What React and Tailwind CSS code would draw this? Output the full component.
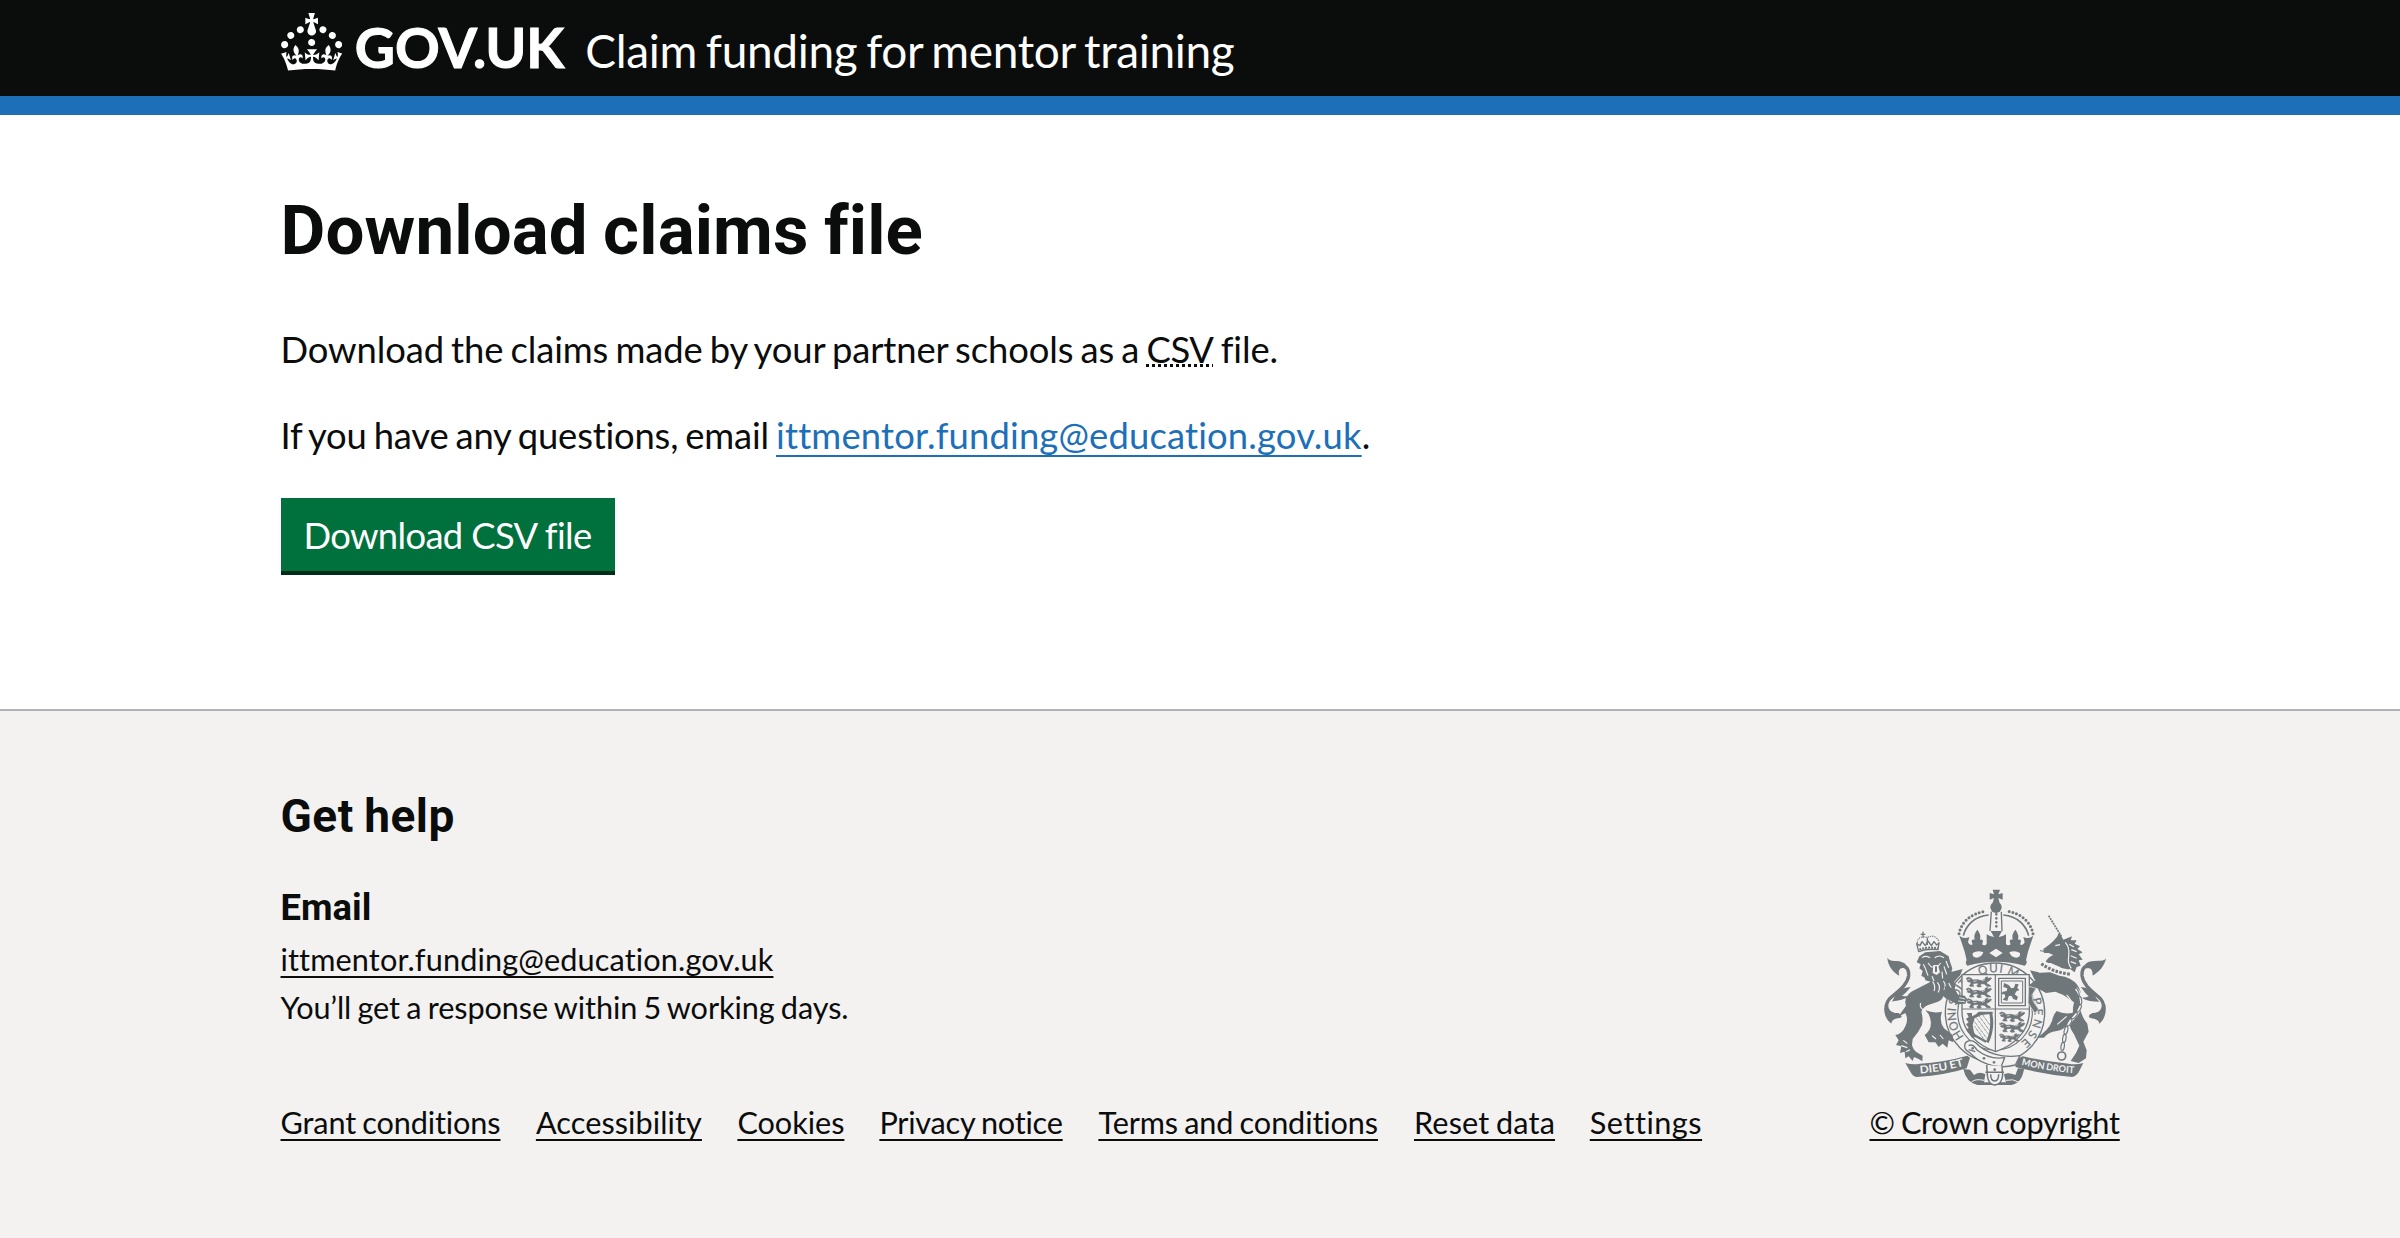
import React from "react";

const CROWN =
  "M22.6 10.4c-1 .4-2-.1-2.4-1-.4-.9.1-2 1-2.4.9-.4 2 .1 2.4 1s-.1 2-1 2.4m-5.9 6.7c-.9.4-2-.1-2.4-1-.4-.9.1-2 1-2.4.9-.4 2 .1 2.4 1s-.1 2-1 2.4m10.8-3.7c-1 .4-2-.1-2.4-1-.4-.9.1-2 1-2.4.9-.4 2 .1 2.4 1s0 2-1 2.4m3.3 4.8c-1 .4-2-.1-2.4-1-.4-.9.1-2 1-2.4.9-.4 2 .1 2.4 1s-.1 2-1 2.4M17 4.7l2.3 1.2V2.5l-2.3.7-.2-.2.9-3h-3.4l.9 3-.2.2c-.1.1-2.3-.7-2.3-.7v3.4L15 4.7c.1.1.1.2.2.2l-1.3 4c-.1.2-.1.4-.1.6 0 1.1.8 2 1.9 2.2h.7c1-.2 1.9-1.1 1.9-2.1 0-.2 0-.4-.1-.6l-1.3-4c-.1-.2 0-.2.1-.3m-7.6 5.7c.9.4 2-.1 2.4-1 .4-.9-.1-2-1-2.4-.9-.4-2 .1-2.4 1s0 2 1 2.4m-5 3c.9.4 2-.1 2.4-1 .4-.9-.1-2-1-2.4-.9-.4-2 .1-2.4 1s.1 2 1 2.4m-3.2 4.8c.9.4 2-.1 2.4-1 .4-.9-.1-2-1-2.4-.9-.4-2 .1-2.4 1s0 2 1 2.4m14.8 11c4.4 0 8.6.3 12.3.8 1.1-4.5 2.4-7 3.7-8.8l-2.5-.9c.2 1.3.3 1.9 0 2.7-.4-.4-.8-1.1-1.1-2.3l-1.2 4c.7-.5 1.3-.8 2-.9-1.1 2.5-2.6 3.1-3.5 3-1.1-.2-1.7-1.2-1.5-2.1.3-1.2 1.5-1.5 2.1-.1 1.1-2.3-.8-3-2-2.3 1.9-1.9 2.1-3.5.6-5.6-2.1 1.6-2.1 3.2-1.2 5.5-1.2-1.4-3.2-.6-2.5 1.6.9-1.4 2.1-.5 1.9.8-.2 1.1-1.7 2.1-3.5 1.9-2.7-.2-2.9-2.1-2.9-3.6.7-.1 1.9.5 2.9 1.9l.4-4.3c-1.1 1.1-2.1 1.4-3.2 1.4.4-1.2 2.1-3 2.1-3h-5.4s1.7 1.9 2.1 3c-1.1 0-2.1-.2-3.2-1.4l.4 4.3c1-1.4 2.2-2 2.9-1.9-.1 1.5-.2 3.4-2.9 3.6-1.9.2-3.4-.8-3.5-1.9-.2-1.3 1-2.2 1.9-.8.7-2.3-1.2-3-2.5-1.6.9-2.2.9-3.9-1.2-5.5-1.5 2-1.3 3.7.6 5.6-1.2-.7-3.1 0-2 2.3.6-1.4 1.8-1.1 2.1.1.2.9-.3 1.9-1.5 2.1-.9.2-2.4-.5-3.5-3 .6 0 1.2.3 2 .9l-1.2-4c-.3 1.1-.7 1.9-1.1 2.3-.3-.8-.2-1.4 0-2.7l-2.9.9C1.3 23 2.6 25.5 3.7 30c3.7-.5 7.9-.8 12.3-.8";

const INK = "#6f777b";
const PAPER = "#f3f2f1";

// One walking lion of the quartered shield, facing left.
function ShieldLion({ x, y }) {
  return (
    <g transform={`translate(${x} ${y})`}>
      <path
        fill={INK}
        stroke={INK}
        strokeWidth="2"
        d="M2 5l7-4 9 3 4 5 14-1 12 3 10-4 3-6 7-1-2 6 9-4 4 2-7 7-8 4 1 6 8 3 3 4-11 0-8-7-9-1-3 5 3 4-10 1-4-4 5-4-1-4-12 1-4 5 4 4-12 0-2-3 5-4-1-6-6 0-5-3 4-3z"
      />
      <path stroke={PAPER} strokeWidth="2" d="M8 7h6M24 13l10-1M50 12l9-4" />
    </g>
  );
}

// Crown, shield in its garter, lion, unicorn and motto scroll.
function RoyalArms() {
  return (
    <svg viewBox="0 0 750 645" className="block h-[215px] w-[250px]" fill="none" stroke={INK} strokeLinejoin="round">
      <defs>
        <path id="garter-top" d="M254 395A121 121 0 0 1 496 395" />
        <path id="garter-left" d="M283 469A118 118 0 0 1 330 286" />
        <path id="garter-right" d="M478 337A118 118 0 0 1 390 512" />
        <path id="motto-left" d="M150 577Q215 573 290 552" />
        <path id="motto-right" d="M454 551Q535 571 618 577" />
      </defs>

      {/* tails */}
      <g strokeLinecap="round">
        <path strokeWidth="10" d="M88 405C48 398 42 374 58 354C76 336 112 316 116 284C117 264 108 254 92 253" />
        <path fill={INK} stroke="none" d="M52 230C60 246 84 234 102 246C112 252 110 262 102 262C88 258 84 272 88 284C70 274 54 256 52 230Z" />
        <path fill={INK} stroke="none" d="M72 350C76 330 92 322 122 318C112 330 106 338 96 344C106 346 112 346 118 346C104 356 86 358 66 362Z" />
        <path fill={INK} stroke="none" d="M46 366C38 384 44 414 64 428C66 412 80 414 96 408L86 396C66 398 52 388 46 366Z" />
        <path strokeWidth="10" d="M662 405C702 398 708 374 692 354C674 336 640 316 636 284C635 264 644 254 658 253" />
        <path fill={INK} stroke="none" d="M708 232C700 246 668 234 650 246C642 252 644 262 650 262C664 260 668 268 668 284C686 274 704 256 708 232Z" />
        <path fill={INK} stroke="none" d="M678 350C674 330 660 322 632 318C642 330 648 340 656 346C648 350 642 350 634 350C650 360 668 362 688 362Z" />
        <path fill={INK} stroke="none" d="M706 370C710 388 706 414 688 428C686 412 670 416 656 408L666 396C684 398 700 388 706 370Z" />
      </g>

      {/* shoulders behind the garter */}
      <path fill={INK} stroke="none" d="M240 274L278 264L260 310L240 306ZM480 268L506 274L512 300L494 296Z" />

      {/* garter */}
      <circle cx="375" cy="395" r="153" fill={PAPER} stroke="none" />
      <circle cx="375" cy="395" r="149" strokeWidth="4" />
      <circle cx="375" cy="395" r="112" strokeWidth="3.5" />
      <g fill={INK} stroke={INK} strokeWidth=".6" fontFamily="Lato, sans-serif" fontSize="35">
        <text letterSpacing="3"><textPath href="#garter-top" startOffset="142">QUI M</textPath></text>
        <text><textPath href="#garter-left" startOffset="2">HONI SOIT</textPath></text>
        <text letterSpacing="9"><textPath href="#garter-right" startOffset="18">PENSE</textPath></text>
      </g>

      {/* lion */}
      <path
        fill={INK}
        stroke="none"
        d="M148 226L166 214L210 210L236 226L240 242L247 262L242 282L246 298L258 310L254 324L264 342L284 350L280 366L258 364L240 356L220 346Q216 362 186 368Q160 374 154 392Q160 412 156 432Q146 454 128 474L126 492Q130 508 140 514L158 524L157 541L146 534L132 528L128 540L116 526L106 532L104 512L90 516L94 496L78 492L86 478L76 462Q96 460 106 436Q116 416 106 396L84 408L108 374Q100 350 124 332L182 302L166 298L164 290L154 284L158 270L148 262L152 250L140 244Z"
      />
      <path
        fill={INK}
        stroke="none"
        d="M166 388Q192 398 216 392Q206 420 222 442L248 462L250 484L236 478L232 500L218 488L206 498L196 484L176 484L164 462Q186 446 182 420Q180 400 166 388Z"
      />
      <g stroke={PAPER} strokeWidth="3.5">
        <path d="M160 386C148 380 150 372 152 366" />
        <path d="M156 230Q166 222 180 230M194 230Q208 220 222 230M174 246L184 258L202 258L212 246" />
        <path d="M228 240L236 260M222 256L230 280M216 272L218 292M166 262L174 284M186 286L192 300M160 250L166 262" />
        <path d="M188 302Q198 316 192 330M202 304Q214 318 204 334M220 300Q230 312 222 326M236 306L248 330" />
        <path d="M100 478L112 488M94 494L112 500M108 512L120 506M186 464L198 474M210 462L220 474" />
      </g>
      <path fill={PAPER} stroke="none" d="M190 252h14l6 22-10 8-12-6z" />
      <path fill={INK} stroke="none" d="M195 256h6v16l-6 2z" />

      {/* lion's crown */}
      <path strokeWidth="4" d="M146 212L140 188L150 194L156 182L166 194L174 180L184 194L192 182L200 192L207 186L204 206Q172 202 146 212Z" />
      <path strokeWidth="3.5" strokeDasharray="4 3" d="M142 186C142 168 160 164 172 170C186 160 204 168 207 184" />
      <path strokeWidth="6" strokeDasharray="6 3" d="M148 206Q174 196 204 202" />
      <path strokeWidth="4" d="M159 152v18M152 160h14M172 170v22" />

      {/* unicorn */}
      <path strokeWidth="5" strokeDasharray="6 2.5" d="M536 104L574 166" />
      <path
        fill={INK}
        stroke="none"
        d="M520 204Q540 190 550 180Q562 170 568 154L580 176L606 166L602 178L620 178L614 188L630 196L622 204L638 214L626 220L638 236L626 238L632 254L620 258L614 274L600 264L586 270L570 258L542 246L524 246Q534 228 550 222L536 216L522 216Z"
      />
      <path
        fill={INK}
        stroke="none"
        d="M498 276L540 274L568 284Q604 288 622 312Q642 340 630 382Q636 410 652 428L656 452L640 482L650 508L648 532L626 546L602 540L618 516L628 494L612 460Q598 440 598 426Q580 448 560 450Q536 452 522 470L500 470Q536 448 546 420Q550 400 560 390Q580 400 606 396L612 364L580 342L556 332L528 336L500 320L488 340L492 362L508 388L494 396L476 366L478 312L498 296Z"
      />
      <g stroke={PAPER} strokeWidth="3.5">
        <path d="M556 194l14-3M586 184Q600 200 596 226Q592 246 604 262M598 190l14 8M604 206l16 6M602 224l18 8M602 242l16 6" />
        <path strokeWidth="12" d="M514 240Q550 266 600 272" />
        <path d="M590 342Q612 362 606 396M562 430l28-24" />
      </g>
      <path strokeWidth="9" strokeDasharray="8 4" d="M514 248Q550 274 602 280" />
      <path strokeWidth="3" d="M522 211l-12-2" />

      {/* chain */}
      <path strokeWidth="9" stroke={PAPER} d="M618 322C650 360 630 392 602 420C580 450 582 486 576 512" />
      <g strokeWidth="3.5">
        <ellipse cx="620" cy="334" rx="6" ry="13" transform="rotate(-20 620 334)" />
        <ellipse cx="630" cy="358" rx="5" ry="12" transform="rotate(-8 630 358)" />
        <ellipse cx="627" cy="382" rx="5" ry="12" transform="rotate(25 627 382)" />
        <ellipse cx="613" cy="404" rx="5" ry="12" transform="rotate(42 613 404)" />
        <ellipse cx="598" cy="424" rx="5" ry="12" transform="rotate(30 598 424)" />
        <ellipse cx="588" cy="448" rx="5" ry="12" transform="rotate(15 588 448)" />
        <ellipse cx="583" cy="472" rx="5" ry="12" transform="rotate(8 583 472)" />
        <ellipse cx="578" cy="496" rx="5" ry="12" transform="rotate(8 578 496)" />
        <circle cx="575" cy="525" r="12" strokeWidth="5" />
      </g>

      {/* shield */}
      <path fill={PAPER} strokeWidth="4" d="M276 281H478V392C478 452 430 494 377 512C324 494 276 452 276 392Z" />
      <path strokeWidth="3.5" d="M376 281V510M277 384H477" />
      <ShieldLion x={286} y={288} />
      <ShieldLion x={286} y={320} />
      <ShieldLion x={286} y={352} />
      <ShieldLion x={386} y={392} />
      <ShieldLion x={386} y={424} />
      <g transform="translate(386 458) scale(.8)"><ShieldLion x={0} y={0} /></g>
      <rect x="386" y="292" width="80" height="82" strokeWidth="4" />
      <rect x="394" y="300" width="64" height="66" strokeWidth="3" />
      <path fill={INK} stroke="none" d="M402 306l14 6 8 10 8-2 4-12 10 2-4 10 6 8-8 2-6 10 10 8-4 10-10-4-6-10-8 2-4 14-14-4 8-8-2-8-10 0 4-8 12-2 2-8-12-4z" />
      <path fill={INK} stroke="none" d="M290 396h16v10l12-6 8-8 42 0 0 6-34 4-20 10-6 20 4 22 8 14-14 2-6-10-12-14 8-6-8-10 8-6-8-10 8-6z" />
      <path strokeWidth="9" d="M362 396C368 424 364 458 352 484" />
      <path strokeWidth="3" strokeDasharray="3 2" d="M320 412l34 46M328 406l30 42M338 402l22 30M314 422l36 50M314 436l30 42" />
      <path strokeWidth="7" d="M312 462L348 482" />

      {/* paws that hold the shield */}
      <path fill={INK} stroke="none" d="M224 316L252 322L264 342L284 344L292 354L286 368L262 370L224 350Z" />
      <path stroke={PAPER} strokeWidth="2.5" d="M268 350l18 4M264 360l20 2" />
      <path fill={INK} stroke={PAPER} strokeWidth="2" d="M498 322L486 342L490 362L506 386L494 396L474 366L476 316Z" />

      {/* garter buckle and strap */}
      <path fill={PAPER} strokeWidth="4" d="M284 496C284 478 304 474 318 486C346 516 396 532 450 524L436 552C400 562 370 558 340 544C318 536 308 522 298 514C290 510 284 504 284 496Z" />
      <path strokeWidth="4" d="M296 494C306 488 314 496 320 506C350 530 380 534 404 530L394 556M296 506L316 512" />
      <g fill={INK} stroke="none">
        <circle cx="342" cy="532" r="4" />
        <circle cx="372" cy="544" r="4" />
        <circle cx="308" cy="502" r="4" />
      </g>

      {/* scroll */}
      <g fill={INK} stroke="none">
        <path d="M106 546Q130 552 150 548Q220 544 292 524L300 530L290 562Q230 582 140 588Q128 586 122 574Z" />
        <path d="M640 546Q616 552 596 548Q530 542 458 526L446 532L436 558Q520 580 606 588Q618 586 626 574Z" />
        <path d="M280 564Q288 604 322 612H424Q456 606 462 564L444 562L436 582Q416 572 402 580L408 604H342L346 580Q330 570 312 582L300 566Z" />
      </g>
      <path fill={PAPER} strokeWidth="4.5" d="M350 552L352 582Q354 610 374 612Q396 610 398 582L396 556" />
      <path strokeWidth="4.5" d="M346 574h56M362 580Q362 600 374 600Q386 600 386 580" />
      <circle cx="374" cy="566" r="4" fill={INK} stroke="none" />
      <path stroke={PAPER} strokeWidth="3" d="M304 604Q314 592 342 598M446 604Q430 592 408 598" />
      <g fill={PAPER} stroke="none" fontFamily="Lato, sans-serif" fontWeight="700" fontSize="32">
        <text textLength="134" lengthAdjust="spacingAndGlyphs"><textPath href="#motto-left">DIEU ET</textPath></text>
        <text fontSize="28" textLength="160" lengthAdjust="spacingAndGlyphs"><textPath href="#motto-right">MON DROIT</textPath></text>
      </g>

      {/* crown */}
      <path fill={PAPER} stroke="none" d="M264 160L300 100L356 86H400L456 100L494 160L482 206L468 238Q378 218 288 238L276 206Z" />
      <path fill={INK} stroke="none" d="M368 26h22l-5 14 13-4v20l-13-5 4 15h-21l4-15-13 5V36l13 4z" />
      <circle cx="378" cy="79" r="17" fill={INK} stroke="none" />
      <g strokeWidth="9" strokeLinecap="round" strokeDasharray="0 11.5">
        <path d="M267 158C274 122 304 96 350 90" />
        <path d="M489 158C482 122 452 96 408 90" />
      </g>
      <path strokeWidth="5" d="M280 164C288 132 314 106 356 102M476 164C468 132 442 106 400 102" />
      <path strokeWidth="4" d="M364 92L360 150M394 92L396 150" />
      <path strokeWidth="8" strokeLinecap="round" strokeDasharray="0 12" d="M379 100V146" />
      <path
        fill={INK}
        stroke="none"
        d="M268 164Q282 176 298 168L294 184Q300 196 308 190Q300 174 314 176Q310 160 322 146Q334 160 330 176Q344 174 336 190Q346 196 350 188L350 160Q362 168 372 168L362 150H396L386 168Q396 168 408 160L408 188Q412 196 422 190Q414 174 428 176Q424 160 436 146Q448 160 444 176Q458 174 450 190Q458 196 464 184L460 168Q476 176 490 164L474 212L468 238Q474 246 464 254Q378 230 292 254Q284 246 290 238L284 212Z"
      />
      <g fill={PAPER} stroke="none">
        <path d="M308 216Q324 206 340 214Q336 228 320 230Q306 230 308 216ZM358 216l20-13 20 13-20 13zM450 216Q434 206 418 214Q422 228 438 230Q452 230 450 216Z" />
      </g>
    </svg>
  );
}

const LINKS = [
  ["Grant conditions", "tracking-[-0.12px] w-[255.4px]"],
  ["Accessibility", "tracking-[0.08px] w-[201.5px]"],
  ["Cookies", "tracking-[-0.04px] w-[142px]"],
  ["Privacy notice", "tracking-[-0.22px] w-[219px]"],
  ["Terms and conditions", "tracking-[-0.11px] w-[315.6px]"],
  ["Reset data", "tracking-[0.16px] w-[175.8px]"],
  ["Settings", "tracking-[0.51px] w-[112px]"],
];

const UNDERLINE = "underline decoration-2 [text-decoration-skip-ink:none]";

export default function App() {
  return (
    <div className="min-h-[1238px] w-full bg-[#f3f2f1] font-['Lato',sans-serif] text-[#0b0c0c]">
      <header className="h-[115px] border-b-[19px] border-[#1d70b8] bg-[#0b0c0c] text-white">
        <div className="mx-auto flex w-[1839px] items-start">
          <svg viewBox="0 0 32 30" fill="currentColor" className="mt-[13px] h-[57.5px] w-[61.3px]">
            <path d={CROWN} />
          </svg>
          <span className="mt-[19px] ml-[13px] w-[230.5px] text-[55.4px] leading-[55px] font-bold whitespace-nowrap [-webkit-text-stroke:1px_currentColor]">
            GOV.UK
          </span>
          <span className="mt-[28px] text-[46px] leading-[46px] tracking-[-0.34px] whitespace-nowrap [word-spacing:-2.5px]">
            Claim funding for mentor training
          </span>
        </div>
      </header>

      <main className="bg-white pt-[74px] pb-[134px]">
        <div className="mx-auto w-[1839px] text-[36.4px] leading-[48px] [word-spacing:-2px]">
          <h1 className="pt-[4px] font-['Roboto',sans-serif] text-[69px] leading-[76px] font-bold tracking-[0.15px]">Download claims file</h1>
          <p className="mt-[56px] tracking-[-0.12px]">
            Download the claims made by your partner schools as a{" "}
            <abbr className="tracking-[-0.4px] underline decoration-dotted decoration-[3px] underline-offset-[1px] [text-decoration-skip-ink:none]">
              CSV
            </abbr>{" "}
            file.
          </p>
          <p className="mt-[38px] tracking-[-0.2px]">
            If you have any questions, email{" "}
            <a className={`text-[#1d70b8] tracking-[0.16px] underline-offset-[6px] ${UNDERLINE}`}>ittmentor.funding@education.gov.uk</a>.
          </p>
          <button className="mt-[39px] block h-[77px] w-[334px] border-b-[4px] border-[#002d18] bg-[#00703c] pt-[2px] text-center leading-[71px] tracking-[-0.65px] text-white">
            Download CSV file
          </button>
        </div>
      </main>

      <footer className="border-t-2 border-[#b1b4b6] pt-[74px]">
        <div className="mx-auto flex w-[1839px] items-end justify-between">
          <div className="text-[30.65px] leading-[48px] [word-spacing:-1.5px]">
            <h2 className="pt-[3px] font-['Roboto',sans-serif] text-[46px] leading-[57px] font-bold tracking-[0.5px]">Get help</h2>
            <h3 className="mt-[38.5px] font-['Roboto',sans-serif] text-[36.4px] font-bold tracking-[0.05px]">Email</h3>
            <div className="mt-[4px]">
              <a className={`tracking-[0.13px] underline-offset-[5px] ${UNDERLINE}`}>ittmentor.funding@education.gov.uk</a>
            </div>
            <p className="tracking-[-0.08px]">You’ll get a response within 5 working days.</p>
            <nav className="mt-[67px] flex whitespace-nowrap">
              {LINKS.map(([label, cls]) => (
                <span key={label} className={cls}>
                  <a className={`underline-offset-[5px] ${UNDERLINE}`}>{label}</a>
                </span>
              ))}
            </nav>
          </div>
          <div className="w-[250px] text-[30.65px] leading-[48px] [word-spacing:-1.5px]">
            <RoyalArms />
            <a className={`mt-[3px] block tracking-[-0.22px] whitespace-nowrap underline-offset-[5px] ${UNDERLINE}`}>© Crown copyright</a>
          </div>
        </div>
      </footer>
    </div>
  );
}
